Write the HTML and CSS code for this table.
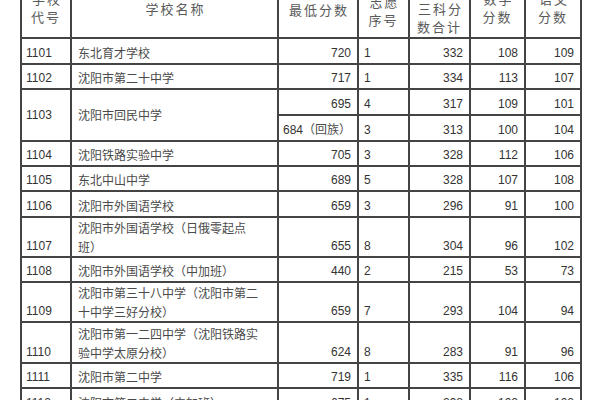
FILE: index.html
```html
<!DOCTYPE html>
<html lang="zh-CN">
<head>
<meta charset="utf-8">
<title>学校分数表</title>
<link rel="stylesheet" href="styles.css">
</head>
<body>
<table class="score">
  <colgroup>
    <col class="c1"><col class="c2"><col class="c3"><col class="c4"><col class="c5"><col class="c6"><col class="c7">
  </colgroup>
  <thead>
    <tr class="head">
      <th class="hb11">学校<br>代号</th>
      <th class="hb19">学校名称</th>
      <th class="hb18">最低分数</th>
      <th class="hb8">志愿<br>序号</th>
      <th class="hb0">三科分<br>数合计</th>
      <th class="hb11">数学<br>分数</th>
      <th class="hb11">语文<br>分数</th>
    </tr>
  </thead>
  <tbody>
    <tr class="h26"><td class="code">1101</td><td class="nm">东北育才学校</td><td class="num">720</td><td class="ord">1</td><td class="num">332</td><td class="num">108</td><td class="num">109</td></tr>
    <tr class="h25"><td class="code">1102</td><td class="nm">沈阳市第二十中学</td><td class="num">717</td><td class="ord">1</td><td class="num">334</td><td class="num">113</td><td class="num">107</td></tr>
    <tr class="h26"><td class="code mid" rowspan="2">1103</td><td class="nm mid" rowspan="2">沈阳市回民中学</td><td class="num">695</td><td class="ord">4</td><td class="num">317</td><td class="num">109</td><td class="num">101</td></tr>
    <tr class="h26"><td class="num">684<span class="cj">（回族）</span></td><td class="ord">3</td><td class="num">313</td><td class="num">100</td><td class="num">104</td></tr>
    <tr class="h25"><td class="code">1104</td><td class="nm">沈阳铁路实验中学</td><td class="num">705</td><td class="ord">3</td><td class="num">328</td><td class="num">112</td><td class="num">106</td></tr>
    <tr class="h25"><td class="code">1105</td><td class="nm">东北中山中学</td><td class="num">689</td><td class="ord">5</td><td class="num">328</td><td class="num">107</td><td class="num">108</td></tr>
    <tr class="h26"><td class="code">1106</td><td class="nm">沈阳市外国语学校</td><td class="num">659</td><td class="ord">3</td><td class="num">296</td><td class="num">91</td><td class="num">100</td></tr>
    <tr class="h40 two"><td class="code">1107</td><td class="nm">沈阳市外国语学校（日俄零起点<br>班）</td><td class="num">655</td><td class="ord">8</td><td class="num">304</td><td class="num">96</td><td class="num">102</td></tr>
    <tr class="h25"><td class="code">1108</td><td class="nm">沈阳市外国语学校（中加班）</td><td class="num">440</td><td class="ord">2</td><td class="num">215</td><td class="num">53</td><td class="num">73</td></tr>
    <tr class="h40 two"><td class="code">1109</td><td class="nm">沈阳市第三十八中学（沈阳市第二<br>十中学三好分校）</td><td class="num">659</td><td class="ord">7</td><td class="num">293</td><td class="num">104</td><td class="num">94</td></tr>
    <tr class="h41 two"><td class="code">1110</td><td class="nm">沈阳市第一二四中学（沈阳铁路实<br>验中学太原分校）</td><td class="num">624</td><td class="ord">8</td><td class="num">283</td><td class="num">91</td><td class="num">96</td></tr>
    <tr class="h25"><td class="code">1111</td><td class="nm">沈阳市第二中学</td><td class="num">719</td><td class="ord">1</td><td class="num">335</td><td class="num">116</td><td class="num">106</td></tr>
    <tr class="h26"><td class="code">1112</td><td class="nm">沈阳市第二中学（中加班）</td><td class="num">675</td><td class="ord">1</td><td class="num">298</td><td class="num">102</td><td class="num">102</td></tr>
  </tbody>
</table>
</body>
</html>
```

FILE: styles.css
```css
html, body {
  margin: 0;
  padding: 0;
  background: #ffffff;
  overflow: hidden;
}

.score {
  border-collapse: separate;
  border-spacing: 0;
  table-layout: fixed;
  width: 562px;
  margin: -22px 0 0 20px;
  border-left: 2px solid #444444;
  font-family: "Liberation Sans", "Noto Sans CJK SC", sans-serif;
  color: #333333;
}

.c1 { width: 50px; }
.c2 { width: 207px; }
.c3 { width: 80px; }
.c4 { width: 51px; }
.c5 { width: 61px; }
.c6 { width: 55px; }
.c7 { width: 56px; }

.score th,
.score td {
  box-sizing: border-box;
  border-right: 2px solid #444444;
  border-bottom: 2px solid #444444;
  padding: 0;
  overflow: hidden;
  white-space: nowrap;
}

.head { height: 61px; }

.score th {
  font-family: "Noto Sans CJK SC", sans-serif;
  font-weight: normal;
  font-size: 13px;
  line-height: 18px;
  letter-spacing: 2px;
  text-indent: 2px;
  color: #5a5a5a;
  text-align: center;
  vertical-align: bottom;
}

.hb0 { padding-bottom: 1px !important; }
.hb8 { padding-bottom: 8px !important; }
.hb11 { padding-bottom: 11px !important; }
.hb18 { padding-bottom: 18px !important; }
.hb19 { padding-bottom: 19px !important; }

.h25 { height: 25px; }
.h26 { height: 26px; }
.h40 { height: 40px; }
.h41 { height: 41px; }

.score td {
  font-size: 12px;
  line-height: 20px;
  vertical-align: bottom;
}

.score .two td { line-height: 19px; }

.score td.mid { vertical-align: middle; }

.code { padding-left: 4px !important; }

.nm {
  font-family: "Noto Sans CJK SC", sans-serif;
  font-size: 13px;
  color: #4a4a4a;
  padding-left: 6px !important;
}

.num {
  text-align: right;
  padding-right: 6px !important;
}

.cj {
  font-family: "Noto Sans CJK SC", sans-serif;
  font-size: 12px;
  line-height: 0;
  color: #4a4a4a;
}

.ord { padding-left: 5px !important; }
```
